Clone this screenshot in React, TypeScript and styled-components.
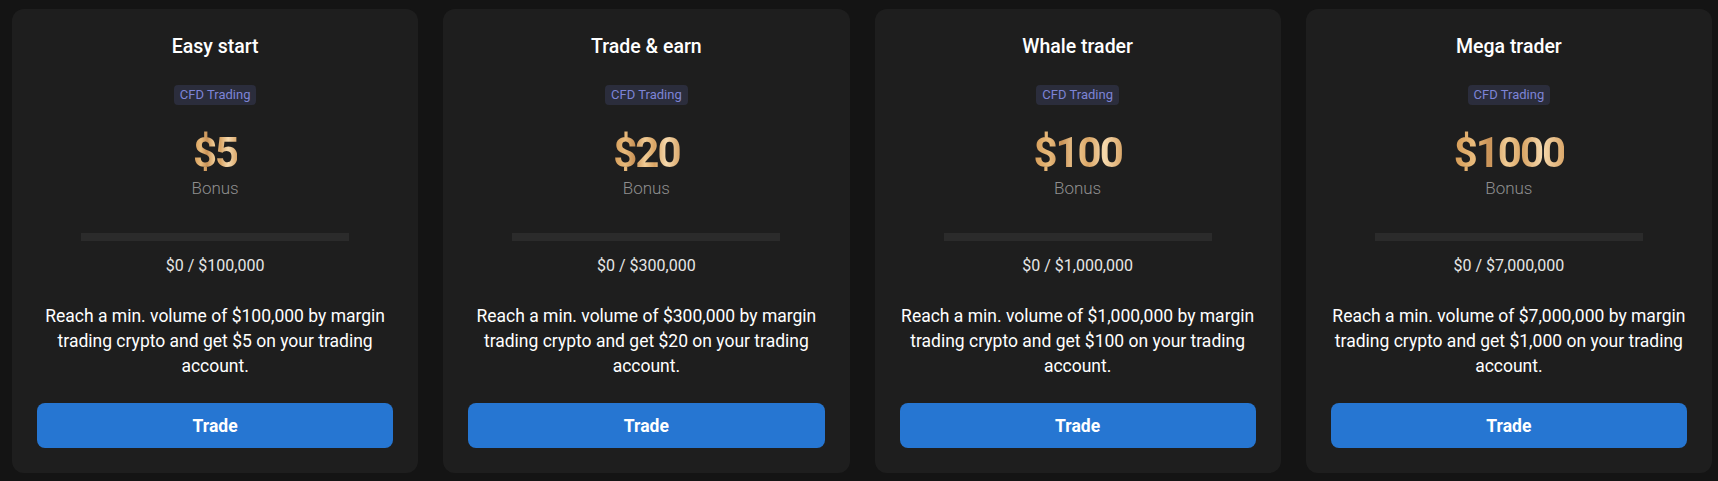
import React from "react";
import styled, { createGlobalStyle } from "styled-components";

const GlobalStyle = createGlobalStyle`
  html, body {
    margin: 0;
    padding: 0;
    background: #141414;
    font-family: Roboto, "Noto Sans", Arial, sans-serif;
  }
`;

interface Tier {
  title: string;
  bonus: string;
  target: string;
  reward: string;
}

const tiers: Tier[] = [
  { title: "Easy start", bonus: "$5", target: "$100,000", reward: "$5" },
  { title: "Trade & earn", bonus: "$20", target: "$300,000", reward: "$20" },
  { title: "Whale trader", bonus: "$100", target: "$1,000,000", reward: "$100" },
  { title: "Mega trader", bonus: "$1000", target: "$7,000,000", reward: "$1,000" },
];

const Page = styled.div`
  display: grid;
  grid-template-columns: repeat(4, 1fr);
  gap: 25px;
  padding: 9px 6px 8px 12px;
  height: 481px;
  box-sizing: border-box;
`;

const Card = styled.div`
  background: #1e1e1e;
  border-radius: 12px;
  padding: 25px;
  display: flex;
  flex-direction: column;
  align-items: center;
  text-align: center;
  box-sizing: border-box;
  min-width: 0;
`;

const Title = styled.h3`
  margin: 0;
  font-size: 19.5px;
  line-height: 26px;
  font-weight: 500;
  color: #ffffff;
`;

const Badge = styled.span`
  margin-top: 25px;
  display: inline-block;
  padding: 0 6px;
  height: 20px;
  line-height: 20px;
  font-size: 13px;
  color: #7d84d6;
  background: #2b2d3c;
  border-radius: 4px;
`;

const Amount = styled.div`
  margin-top: 25px;
  font-size: 42px;
  line-height: 46px;
  font-weight: 700;
  letter-spacing: -2px;
  background: linear-gradient(
    90deg,
    #d49a55 0%,
    #e9bb7c 18%,
    #c99257 32%,
    #f1cc95 48%,
    #d9a464 62%,
    #f6d9ad 80%,
    #dba86b 100%
  );
  -webkit-background-clip: text;
  background-clip: text;
  color: transparent;
`;

const BonusLabel = styled.div`
  margin-top: 2px;
  font-size: 17px;
  line-height: 20px;
  font-weight: 300;
  color: #8f8f8f;
`;

const Progress = styled.div`
  margin-top: 35px;
  width: 268px;
  height: 8px;
  background: #2b2b2b;
`;

const Range = styled.div`
  margin-top: 15px;
  font-size: 16px;
  line-height: 20px;
  font-weight: 400;
  color: #e6e6e6;
`;

const Description = styled.p`
  margin: 28px -6px 0;
  font-size: 17.5px;
  line-height: 25px;
  font-weight: 400;
  color: #ffffff;
`;

const TradeButton = styled.button`
  margin-top: auto;
  width: 100%;
  height: 45px;
  border: none;
  border-radius: 8px;
  background: #2676d2;
  color: #ffffff;
  font-family: inherit;
  font-size: 17.5px;
  font-weight: 700;
  cursor: pointer;
`;

export default function App() {
  return (
    <>
      <GlobalStyle />
      <Page>
        {tiers.map((t) => (
          <Card key={t.title}>
            <Title>{t.title}</Title>
            <Badge>CFD Trading</Badge>
            <Amount>{t.bonus}</Amount>
            <BonusLabel>Bonus</BonusLabel>
            <Progress />
            <Range>{`$0 / ${t.target}`}</Range>
            <Description>
              {`Reach a min. volume of ${t.target} by margin trading crypto and get ${t.reward} on your trading account.`}
            </Description>
            <TradeButton>Trade</TradeButton>
          </Card>
        ))}
      </Page>
    </>
  );
}
